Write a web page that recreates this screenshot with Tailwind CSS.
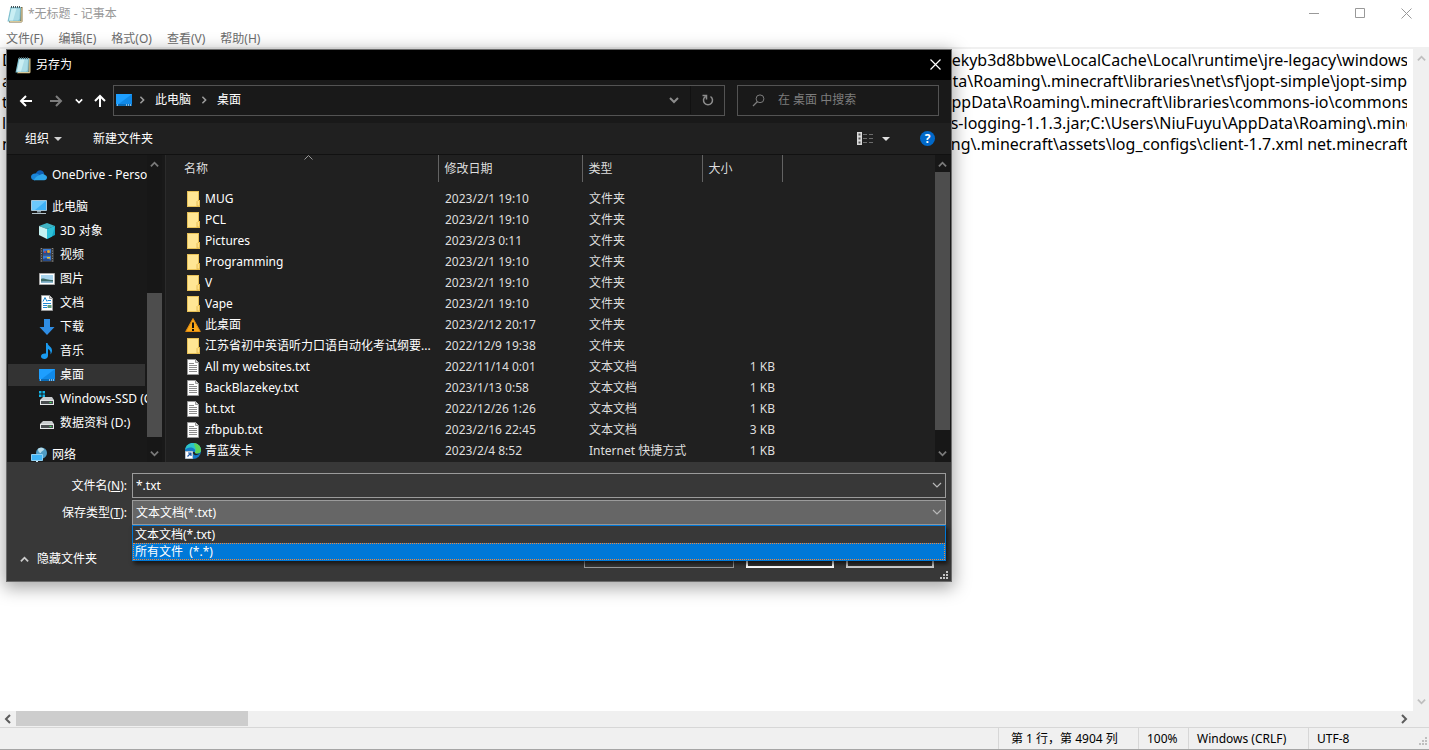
<!DOCTYPE html>
<html lang="zh-CN">
<head>
    <meta charset="UTF-8">
    <meta name="viewport" content="width=device-width, initial-scale=1.0">
    <title>*无标题 - 记事本</title>
    <script src="https://cdn.jsdelivr.net/npm/@tailwindcss/browser@4"></script>
</head>
<body class="font-['Noto_Sans','Noto_Sans_CJK_SC',sans-serif] text-xs overflow-hidden">
    <!-- Icons -->
    <svg class="hidden">
        <symbol id="i-notepad" viewBox="0 0 16 18">
            <path d="M4 2h11.500v14.500l-1 1H2z" fill="#7a6a45"/>
            <path d="M3.500 2H14l-.5 13.500-1.500 1H.5z" fill="#7fbfce"/>
            <path d="M4.500 3.500h8.500L12.500 14 11 15.500H2z" fill="#a9dbe6"/>
            <path d="M4.500 3.500h5L6 15.500H2z" fill="#c9eef3"/>
            <path d="M14.800 3v13.500H3" stroke="#d8c99a" fill="none"/>
            <path d="M4.500 1v2M6.500 1v2M8.500 1v2M10.500 1v2M12.500 1v2" stroke="#44565c"/>
        </symbol>
        <symbol id="i-folder" viewBox="0 0 16 16">
            <path d="M2 0h12v9h1v7H2z" fill="#e8c158"/>
            <path d="M3 1h10v14H3z" fill="#ffe694"/>
            <path d="M12 10.500l1-1h1.500V15H12z" fill="#ffe08a" stroke="#e0b648" stroke-width=".8"/>
        </symbol>
        <symbol id="i-txt" viewBox="0 0 16 16">
            <path d="M2.500.5h8l3 3v12h-11z" fill="#fff" stroke="#9a9a9a"/>
            <path d="M10.500.5v3h3" fill="#ddd" stroke="#9a9a9a"/>
            <path d="M4 4.500h5M4 6.500h8M4 8.500h8M4 10.500h8M4 12.500h8" stroke="#8c8c8c"/>
        </symbol>
        <symbol id="i-warn" viewBox="0 0 16 16">
            <path d="M8 1.500L15.300 14.500H.7z" fill="#fba919" stroke="#e08a10" stroke-linejoin="round"/>
            <path d="M7 5.500h2V11H7zM7 12h2v2H7z" fill="#111"/>
        </symbol>
        <symbol id="i-edge" viewBox="0 0 16 16">
            <circle cx="8" cy="8" r="8" fill="#1578c8"/>
            <path d="M0 7C1 2 4 0 8 0c5 0 8 3.500 8 7 0 2.500-2 3.500-4 3.500-1.500 0-2.500-.5-2-1.500C11 6 8 4.500 5.500 4.500 3 4.500 1 5.500 0 7z" fill="#2cc3c9"/>
            <path d="M9 0.200C13.500.6 16 3.800 16 7c0 2.500-2 3.500-4 3.500-1.500 0-2.500-.5-2-1.500 2-3-1-6-1-8.800z" fill="#5bd45a"/>
            <path d="M9.800 9c-.5 1.500 2 2.500 5 1.300l-1 1C11 13 7.500 12 8 9z" fill="#202020"/>
            <path d="M0.500 8.500h7v7h-7z" fill="#fff" stroke="#b8c4d0"/>
            <path d="M2.500 13.500l3-3M3 10h3v3" stroke="#1c57a6" stroke-width="1.200" fill="none"/>
        </symbol>
        <symbol id="i-cloud" viewBox="0 0 16 16">
            <path d="M4.500 7C5.500 4.300 7.500 3 9.500 3.200c2.200.2 3.500 2 3.700 3.800L8 10z" fill="#0f5fb4"/>
            <path d="M4 6.500c2-.4 3.500.5 5 2L4 13.200H3.500C1.500 13.200 0 11.800 0 9.800 0 8 1.800 6.600 4 6.500z" fill="#1a86d9"/>
            <path d="M3 13.200C4 10 8 8 10 7.500c1.500-.7 3-.5 4 .5 1.300.5 2 1.500 2 2.500 0 1.500-1.200 2.700-2.800 2.700z" fill="#2ea6ea"/>
        </symbol>
        <symbol id="i-pc" viewBox="0 0 16 16">
            <path d="M.5 1.500h15v10H.5z" fill="#3fb1f5" stroke="#a9c6d8"/>
            <path d="M1 2h14L4 11H1z" fill="#6cc8fb"/>
            <path d="M6 12h4v1.500H6z" fill="#8da2ae"/>
            <path d="M1 14h14v1H1z" fill="#b4c3cb"/>
        </symbol>
        <symbol id="i-cube" viewBox="0 0 16 16">
            <path d="M8 0l8 3-8 3-8-3z" fill="#3fb4c4"/>
            <path d="M0 3l8 3v10l-8-4z" fill="#c5f2f2"/>
            <path d="M16 3L8 6v10l8-4z" fill="#14a5c4"/>
            <path d="M8 6l8-3-3 10.500L8 16z" fill="#2cc0d8"/>
        </symbol>
        <symbol id="i-video" viewBox="0 0 16 16">
            <path d="M1 1h14v14H1z" fill="#3c3c3c"/>
            <path d="M2.500 1v14M13.500 1v14" stroke="#8a8a8a" stroke-dasharray="1 1.500"/>
            <path d="M4 2h8v5.500H4zM4 8.500h8V14H4z" fill="#3a7bd5"/>
            <path d="M4 5.500l3-2 5 3v1H4zM4 12l3-1 5 2v1H4z" fill="#264c8c"/>
            <circle cx="9.500" cy="4.500" r="1.500" fill="#e9a72a"/>
            <circle cx="6" cy="5" r="1" fill="#d34646"/>
            <path d="M8 10h3v1.500H8z" fill="#e9c22a"/>
        </symbol>
        <symbol id="i-picture" viewBox="0 0 16 16">
            <path d="M.5 2.500h15v11H.5z" fill="#fff" stroke="#a8a8a8"/>
            <path d="M2 4h12v8H2z" fill="#a8d4ee"/>
            <path d="M2 8c3-1.500 5 1 12 1v3H2z" fill="#3d6c68"/>
            <path d="M2 10.500c4-.5 8 0 12 0V12H2z" fill="#8bb7cf"/>
        </symbol>
        <symbol id="i-doc" viewBox="0 0 16 16">
            <path d="M2.500.5h8l3 3v12h-11z" fill="#fff" stroke="#9a9a9a"/>
            <path d="M10.500.5v3h3" fill="#ddd" stroke="#9a9a9a"/>
            <path d="M4 6.500l2-4 2 4M8.500 5.500H12M4 8.500h8M4 10.500h4M4 12.500h4" stroke="#1e88d2" fill="none"/>
            <path d="M8.500 10h4v3h-4z" fill="#5c9a7c"/>
        </symbol>
        <symbol id="i-down" viewBox="0 0 16 16">
            <path d="M5 0h6v8h4.500L8 16 .5 8H5z" fill="#2f8de4"/>
        </symbol>
        <symbol id="i-music" viewBox="0 0 16 16">
            <path d="M7 0h1.500c.5 3 4.500 3.500 4.500 7.500 0 1.500-.5 2.500-1.500 4 .5-3-.5-4.500-2.500-5.500v6.500c0 2-1.500 3.500-3.500 3.500S2 15 2 13.300C2 11.500 4 10 7 10.500z" fill="#1a9bf0"/>
        </symbol>
        <symbol id="i-desktop" viewBox="0 0 16 16">
            <path d="M0 2h16v12H0z" fill="#1e9fff"/>
            <path d="M0 14L16 2v12z" fill="#1089e8"/>
            <path d="M0 12h16v2H0z" fill="#0a6cb8"/>
            <path d="M1 13h1M10 13h1M12 13h1M14 13h1" stroke="#fff"/>
        </symbol>
        <symbol id="i-ssd" viewBox="0 0 16 16">
            <path d="M0 0h2.500v2.500H0zM3.500 0H6v2.500H3.500zM0 3.500h2.500V6H0zM3.500 3.500H6V6H3.500z" fill="#12b5e8"/>
            <path d="M4 6h9l2 3H1z" fill="#c9ccce"/>
            <path d="M1 9h14v5H1z" fill="#e6e8e9"/>
            <path d="M2 10h12v3H2z" fill="#4a4d50"/>
            <path d="M10.500 11h2v1h-2z" fill="#3ee05a"/>
        </symbol>
        <symbol id="i-hdd" viewBox="0 0 16 16">
            <path d="M4 6h9l2 3H1z" fill="#c9ccce"/>
            <path d="M1 9h14v5H1z" fill="#e6e8e9"/>
            <path d="M2 10h12v3H2z" fill="#4a4d50"/>
            <path d="M10.500 11h2v1h-2z" fill="#3ee05a"/>
        </symbol>
        <symbol id="i-net" viewBox="0 0 16 16">
            <circle cx="10.500" cy="6" r="5.500" fill="#4f9cc4"/>
            <path d="M7 2c2-2 5-1 6 0 0 2-3 2-3 4-2 0-3-2-3-4z" fill="#b8dcea"/>
            <path d="M.5 7.500h11v6H.5z" fill="#41b4f5" stroke="#8fd0f2"/>
            <path d="M5 14h2v2H5z" fill="#cfe3ee"/>
        </symbol>
        <symbol id="i-chevron" viewBox="0 0 10 10">
            <path d="M1 3l4 4 4-4" fill="none" stroke="currentColor" stroke-width="2"/>
        </symbol>
        <symbol id="i-chevron-thin" viewBox="0 0 10 10">
            <path d="M1 3l4 4 4-4" fill="none" stroke="currentColor" stroke-width="1.200"/>
        </symbol>
        <symbol id="i-grip" viewBox="0 0 8 8">
            <path d="M6 0h2v2H6zM3 3h2v2H3zM6 3h2v2H6zM0 6h2v2H0zM3 6h2v2H3zM6 6h2v2H6z" fill="currentColor"/>
        </symbol>
    </svg>

    <div class="relative h-screen flex flex-col bg-white overflow-hidden">
        <!-- Notepad title bar -->
        <header class="h-[27px] flex items-center pl-[7px] text-[#999]">
            <svg class="w-4 h-[18px] mr-[5px]"><use href="#i-notepad"/></svg>
            <h1 class="flex-1">*无标题 - 记事本</h1>
            <button class="w-[46px] h-full flex items-center justify-center" aria-label="最小化">
                <svg class="w-[11px] h-[11px]" viewBox="0 0 11 11"><path d="M0 5.500h10" stroke="#999"/></svg>
            </button>
            <button class="w-[46px] h-full flex items-center justify-center" aria-label="最大化">
                <svg class="w-[11px] h-[11px]" viewBox="0 0 11 11"><path d="M.5.5h9v9h-9z" fill="none" stroke="#999"/></svg>
            </button>
            <button class="w-[46px] h-full flex items-center justify-center" aria-label="关闭">
                <svg class="w-[11px] h-[11px]" viewBox="0 0 11 11"><path d="M.5.5l10 10M10.500.5l-10 10" stroke="#999"/></svg>
            </button>
        </header>

        <!-- Menu bar -->
        <nav class="h-[22px] flex items-center gap-[15px] pl-1.5 pt-1 text-[#6d6d6d] border-b-2 border-[#f0f0f0]">
            <button>文件(F)</button>
            <button>编辑(E)</button>
            <button>格式(O)</button>
            <button>查看(V)</button>
            <button>帮助(H)</button>
        </nav>

        <!-- Text area -->
        <main class="flex-1 min-h-0 flex">
            <textarea id="editor" aria-label="文本编辑器" spellcheck="false" class="flex-1 min-w-0 mr-1.5 pl-0.5 pt-px resize-none outline-none overflow-hidden whitespace-pre text-base leading-[21px] text-black [tab-size:900px]"></textarea>
            <div class="w-4 bg-[#f0f0f0] flex flex-col justify-between items-center py-[5px] text-[#bfbfbf]">
                <svg class="w-[9px] h-[9px] rotate-180"><use href="#i-chevron"/></svg>
                <svg class="w-[9px] h-[9px]"><use href="#i-chevron"/></svg>
            </div>
        </main>
        <div class="h-4 bg-[#f0f0f0] flex items-center text-[#5c5c5c] pr-5">
            <svg class="w-[10px] h-[10px] mx-[3px] rotate-90"><use href="#i-chevron"/></svg>
            <div class="flex-1 h-full">
                <div class="w-[232px] h-[15px] bg-[#cdcdcd]"></div>
            </div>
            <svg class="w-[10px] h-[10px] -rotate-90"><use href="#i-chevron"/></svg>
        </div>

        <!-- Status bar -->
        <footer class="h-[23px] bg-[#f0f0f0] border-t border-t-[#d7d7d7] border-b border-b-[#a5a5a5] flex justify-end leading-[21px] text-black">
            <div class="w-[140px] border-l border-[#d7d7d7] pl-3">第 1 行，第 4904 列</div>
            <div class="w-[50px] border-l border-[#d7d7d7] pl-2">100%</div>
            <div class="w-[120px] border-l border-[#d7d7d7] pl-2">Windows (CRLF)</div>
            <div class="w-[121px] border-l border-[#d7d7d7] pl-2 pr-0.5 flex justify-between items-end">UTF-8
                <svg class="w-2 h-2 mb-1 text-[#bfbfbf]"><use href="#i-grip"/></svg>
            </div>
        </footer>

        <!-- Save-as dialog -->
        <section role="dialog" aria-labelledby="dlg-title" class="absolute left-1.5 top-[49px] w-[946px] border border-[#6b6b6b] bg-[#383838] text-white shadow-[0_4px_16px_2px_rgba(0,0,0,0.35)]">
            <div class="h-[30px] bg-black flex items-center pl-2 pb-px">
                <svg class="w-4 h-[18px] mr-[5px]"><use href="#i-notepad"/></svg>
                <h2 id="dlg-title" class="flex-1">另存为</h2>
                <button class="w-[31px] h-full flex items-center justify-center" aria-label="关闭">
                    <svg class="w-[11px] h-[11px]" viewBox="0 0 11 11"><path d="M.5.5l10 10M10.500.5l-10 10" stroke="#fff" stroke-width="1.200"/></svg>
                </button>
            </div>

            <!-- Address bar -->
            <div class="h-[43px] bg-[#191919] flex items-start pt-[5px] pr-3 pl-3">
                <div class="w-[94px] h-[31px] flex items-center">
                    <button aria-label="后退"><svg class="w-[14px] h-[14px]" viewBox="0 0 14 14"><path d="M13 7H2M7 2L2 7l5 5" fill="none" stroke="#fff" stroke-width="2"/></svg></button>
                    <button aria-label="前进" class="ml-4"><svg class="w-[14px] h-[14px]" viewBox="0 0 14 14"><path d="M1 7h11M7 2l5 5-5 5" fill="none" stroke="#7d7d7d" stroke-width="2"/></svg></button>
                    <button aria-label="最近浏览的位置" class="ml-3"><svg class="w-2 h-2"><use href="#i-chevron"/></svg></button>
                    <button aria-label="上移" class="ml-[10px]"><svg class="w-[14px] h-[14px]" viewBox="0 0 14 14"><path d="M7 13V2M2 7l5-5 5 5" fill="none" stroke="#fff" stroke-width="2"/></svg></button>
                </div>
                <div class="flex-1 h-[31px] border border-[#535353] flex items-center pb-px">
                    <svg class="w-4 h-4 ml-0.5 mr-[6px]"><use href="#i-desktop"/></svg>
                    <svg class="w-2 h-2 -rotate-90 mr-[9px] text-[#9a9a9a]"><use href="#i-chevron"/></svg>
                    <a href="#">此电脑</a>
                    <svg class="w-2 h-2 -rotate-90 mx-[9px] text-[#9a9a9a]"><use href="#i-chevron"/></svg>
                    <a href="#" class="flex-1">桌面</a>
                    <button aria-label="上一个位置" class="w-[33px] h-full flex items-center justify-center border-r border-[#111] text-[#8c8c8c]"><svg class="w-[10px] h-[10px]"><use href="#i-chevron"/></svg></button>
                    <button aria-label="刷新" class="w-[33px] h-full flex items-center justify-center text-[#8c8c8c]">
                        <svg class="w-3 h-3" viewBox="0 0 12 12"><path d="M8.500 2.500A4.500 4.500 0 1 1 3.500 2.500M0.500 1.500h4v4" fill="none" stroke="currentColor" stroke-width="1.500"/></svg>
                    </button>
                </div>
                <label class="w-[202px] h-[31px] ml-3 border border-[#535353] flex items-center pl-[14px] pb-px">
                    <svg class="w-[13px] h-[13px] mr-[13px] shrink-0" viewBox="0 0 13 13"><path d="M1 12l4.500-4.500" stroke="#7d7d7d" stroke-width="1.200"/><circle cx="8" cy="4.800" r="3.900" fill="none" stroke="#7d7d7d"/></svg>
                    <input type="text" aria-label="搜索" placeholder="在 桌面 中搜索" class="min-w-0 flex-1 bg-transparent outline-none placeholder:text-[#7d7d7d]">
                </label>
            </div>

            <!-- Toolbar -->
            <div class="h-[32px] bg-[#202020] border-b border-[#111] flex items-center pl-[18px] pr-4">
                <button class="flex items-center gap-[5px]">组织
                    <svg class="w-2 h-1" viewBox="0 0 8 4"><path d="M0 0h8L4 4z" fill="#d0d0d0"/></svg>
                </button>
                <button class="ml-[31px]">新建文件夹</button>
                <button aria-label="更改视图" class="ml-auto flex items-center gap-[9px]">
                    <svg class="w-4 h-[13px]" viewBox="0 0 16 13"><path d="M0 0h5v13H0z" fill="#d8d8d8"/><path d="M1.500 1.500h2v2h-2zM1.500 5.500h2v2h-2zM1.500 9.500h2v2h-2z" fill="#555"/><path d="M6 2.500h4M12 2.500h4M6 6.500h4M12 6.500h4M6 10.500h4M12 10.500h4" stroke="#6d6d6d"/></svg>
                    <svg class="w-2 h-1" viewBox="0 0 8 4"><path d="M0 0h8L4 4z" fill="#e0e0e0"/></svg>
                </button>
                <button aria-label="帮助" class="ml-[30px] w-[15px] h-[15px] rounded-full bg-[#0068c9] font-bold leading-[15px]">?</button>
            </div>

            <div class="h-[307px] flex">
                <!-- Folder tree -->
                <div class="w-[140px] bg-[#191919] overflow-hidden pt-2">
                    <ul id="tree"></ul>
                </div>
                <div class="w-[15px] bg-[#171717] flex flex-col items-center pt-[5px] pb-1 text-[#7a7a7a]">
                    <svg class="w-[9px] h-[9px] rotate-180"><use href="#i-chevron"/></svg>
                    <div class="w-full h-36 mt-[124px] bg-[#4d4d4d]"></div>
                    <svg class="w-[9px] h-[9px] mt-auto"><use href="#i-chevron"/></svg>
                </div>
                <div class="w-1 bg-[#191919] border-r border-[#2b2b2b]"></div>

                <!-- File list -->
                <div class="relative flex-1 bg-[#202020] overflow-hidden">
                    <svg class="absolute left-[138px] top-0 w-[9px] h-[5px]" viewBox="0 0 9 5"><path d="M.5 4.500l4-4 4 4" fill="none" stroke="#999"/></svg>
                    <table class="w-full table-fixed border-collapse">
                        <colgroup>
                            <col class="w-[272px]"><col class="w-[144px]"><col class="w-[120px]"><col class="w-[80px]"><col>
                        </colgroup>
                        <thead>
                            <tr class="h-[27px] text-left text-[#dedede]">
                                <th class="font-normal pl-[18px] border-r border-[#636363]">名称</th>
                                <th class="font-normal pl-1.5 border-r border-[#636363]">修改日期</th>
                                <th class="font-normal pl-1.5 border-r border-[#636363]">类型</th>
                                <th class="font-normal pl-1.5 border-r border-[#636363]">大小</th>
                                <th></th>
                            </tr>
                            <tr class="h-[6px]"></tr>
                        </thead>
                        <tbody id="files"></tbody>
                    </table>
                </div>
                <div class="w-4 bg-[#171717] flex flex-col items-start pt-[5px] pb-1 text-[#7a7a7a]">
                    <svg class="w-[9px] h-[9px] ml-[3px] rotate-180"><use href="#i-chevron"/></svg>
                    <div class="w-[15px] h-[258px] mt-[3px] bg-[#4d4d4d]"></div>
                    <svg class="w-[9px] h-[9px] ml-[3px] mt-auto"><use href="#i-chevron"/></svg>
                </div>
            </div>

            <!-- File name and type -->
            <form class="pt-[11px] pr-[5px]" onsubmit="return false">
                <div class="flex items-center">
                    <label for="fname" class="w-[125px] pr-[5px] text-right">文件名(<u>N</u>):</label>
                    <div class="relative flex-1">
                        <input id="fname" type="text" value="*.txt" class="w-full h-[25px] border border-[#9b9b9b] bg-[#383838] pl-[3px] pb-px outline-none">
                        <svg class="absolute right-1 top-[7px] w-[10px] h-[10px] text-[#b8b8b8]"><use href="#i-chevron-thin"/></svg>
                    </div>
                </div>
                <div class="flex items-center mt-0.5">
                    <label for="ftype" class="w-[125px] pr-[5px] text-right">保存类型(<u>T</u>):</label>
                    <div class="relative flex-1">
                        <select id="ftype" class="block w-full h-[25px] appearance-none border border-[#9b9b9b] bg-[#666] pl-[3px] outline-none">
                            <option>文本文档(*.txt)</option>
                            <option>所有文件 (*.*)</option>
                        </select>
                        <svg class="absolute right-1 top-[7px] w-[10px] h-[10px] text-[#b8b8b8]"><use href="#i-chevron-thin"/></svg>
                        <ul role="listbox" aria-label="保存类型" class="absolute z-10 left-0 right-0 top-[25px] bg-[#383838] border border-[#0078d7] leading-[17px] shadow-[2px_3px_4px_rgba(0,0,0,0.6)]">
                            <li role="option" class="h-[17px] pl-0.5">文本文档(*.txt)</li>
                            <li role="option" aria-selected="true" class="h-[17px] pl-px bg-[#0078d7] border border-dotted border-[#f08a3c] leading-[15px] whitespace-pre">所有文件  (*.*)</li>
                        </ul>
                    </div>
                </div>
                <div class="flex items-end h-[43px] pr-3">
                    <button type="button" class="flex items-center h-[18px] pl-[13px]">
                        <svg class="w-[9px] h-[9px] mr-2 rotate-180 text-[#ccc]"><use href="#i-chevron"/></svg>隐藏文件夹
                    </button>
                    <label for="enc" class="ml-auto mr-2 h-[21px] leading-[16px]">编码(<u>E</u>):</label>
                    <select id="enc" class="w-[150px] h-[23px] mr-3 appearance-none border border-[#9b9b9b] pl-1 pb-1 bg-[#383838] leading-3"><option>UTF-8</option></select>
                    <button class="w-[88px] h-[23px] mr-3 pb-1 border-2 border-white bg-[#333] leading-3">保存(<u>S</u>)</button>
                    <button type="button" class="w-[88px] h-[23px] pb-1 border-2 border-[#cfcfcf] bg-[#333] leading-3">取消</button>
                </div>
                <div class="h-[13px] flex justify-end items-end pb-0.5 -mr-0.5 text-[#c4c4c4]"><svg class="w-2 h-2"><use href="#i-grip"/></svg></div>
            </form>
        </section>
    </div>

    <script>
        // Document text, the hidden middle of each line is a tab stop
        const lines = [
            ['D', '     _8wekyb3d8bbwe\\LocalCache\\Local\\runtime\\jre-legacy\\windows-x64'],
            ['a', 'AppData\\Roaming\\.minecraft\\libraries\\net\\sf\\jopt-simple\\jopt-simple'],
            ['t', '        \\AppData\\Roaming\\.minecraft\\libraries\\commons-io\\commons-io'],
            ['l', '       ons-logging-1.1.3.jar;C:\\Users\\NiuFuyu\\AppData\\Roaming\\.minecraft'],
            ['n', '     aming\\.minecraft\\assets\\log_configs\\client-1.7.xml net.minecraft']
        ];
        document.getElementById('editor').value = lines.map(l => l.join('\t')).join('\n');

        // Folder tree: name, icon, row style
        const root = 'flex items-center h-[22px] my-px pl-6 whitespace-nowrap';
        const child = 'flex items-center h-[22px] my-px pl-8 whitespace-nowrap';
        const tree = [
            ['OneDrive - Personal', 'cloud', root],
            ['此电脑', 'pc', 'flex items-center h-[22px] mt-[9px] mb-px pl-6 whitespace-nowrap'],
            ['3D 对象', 'cube', child],
            ['视频', 'video', child],
            ['图片', 'picture', child],
            ['文档', 'doc', child],
            ['下载', 'down', child],
            ['音乐', 'music', child],
            ['桌面', 'desktop', 'flex items-center h-[22px] my-px ml-px mr-0.5 pl-[31px] whitespace-nowrap bg-[#333]'],
            ['Windows-SSD (C:)', 'ssd', child],
            ['数据资料 (D:)', 'hdd', child],
            ['网络', 'net', 'flex items-center h-[22px] mt-[9px] pl-6 whitespace-nowrap']
        ];
        document.getElementById('tree').innerHTML = tree.map(([name, icon, cls]) => `
            <li class="flow-root"><a href="#" class="${cls}"><svg class="w-4 h-4 mr-[5px] shrink-0"><use href="#i-${icon}"/></svg>${name}</a></li>`).join('');

        const files = [
            ['MUG', 'folder', '2023/2/1 19:10', '文件夹', ''],
            ['PCL', 'folder', '2023/2/1 19:10', '文件夹', ''],
            ['Pictures', 'folder', '2023/2/3 0:11', '文件夹', ''],
            ['Programming', 'folder', '2023/2/1 19:10', '文件夹', ''],
            ['V', 'folder', '2023/2/1 19:10', '文件夹', ''],
            ['Vape', 'folder', '2023/2/1 19:10', '文件夹', ''],
            ['此桌面', 'warn', '2023/2/12 20:17', '文件夹', ''],
            ['江苏省初中英语听力口语自动化考试纲要...', 'folder', '2022/12/9 19:38', '文件夹', ''],
            ['All my websites.txt', 'txt', '2022/11/14 0:01', '文本文档', '1 KB'],
            ['BackBlazekey.txt', 'txt', '2023/1/13 0:58', '文本文档', '1 KB'],
            ['bt.txt', 'txt', '2022/12/26 1:26', '文本文档', '1 KB'],
            ['zfbpub.txt', 'txt', '2023/2/16 22:45', '文本文档', '3 KB'],
            ['青蓝发卡', 'edge', '2023/2/4 8:52', 'Internet 快捷方式', '1 KB']
        ];
        document.getElementById('files').innerHTML = files.map(([name, icon, date, type, size]) => `
            <tr class="h-[21px] text-[#dedede] whitespace-nowrap">
                <td class="pl-[19px] text-white"><div class="flex items-center"><svg class="w-4 h-4 mr-1 shrink-0"><use href="#i-${icon}"/></svg>${name}</div></td>
                <td class="pl-[7px]">${date}</td>
                <td class="pl-[7px]">${type}</td>
                <td class="pr-[7px] text-right">${size}</td>
                <td></td>
            </tr>`).join('');
    </script>
</body>
</html>
